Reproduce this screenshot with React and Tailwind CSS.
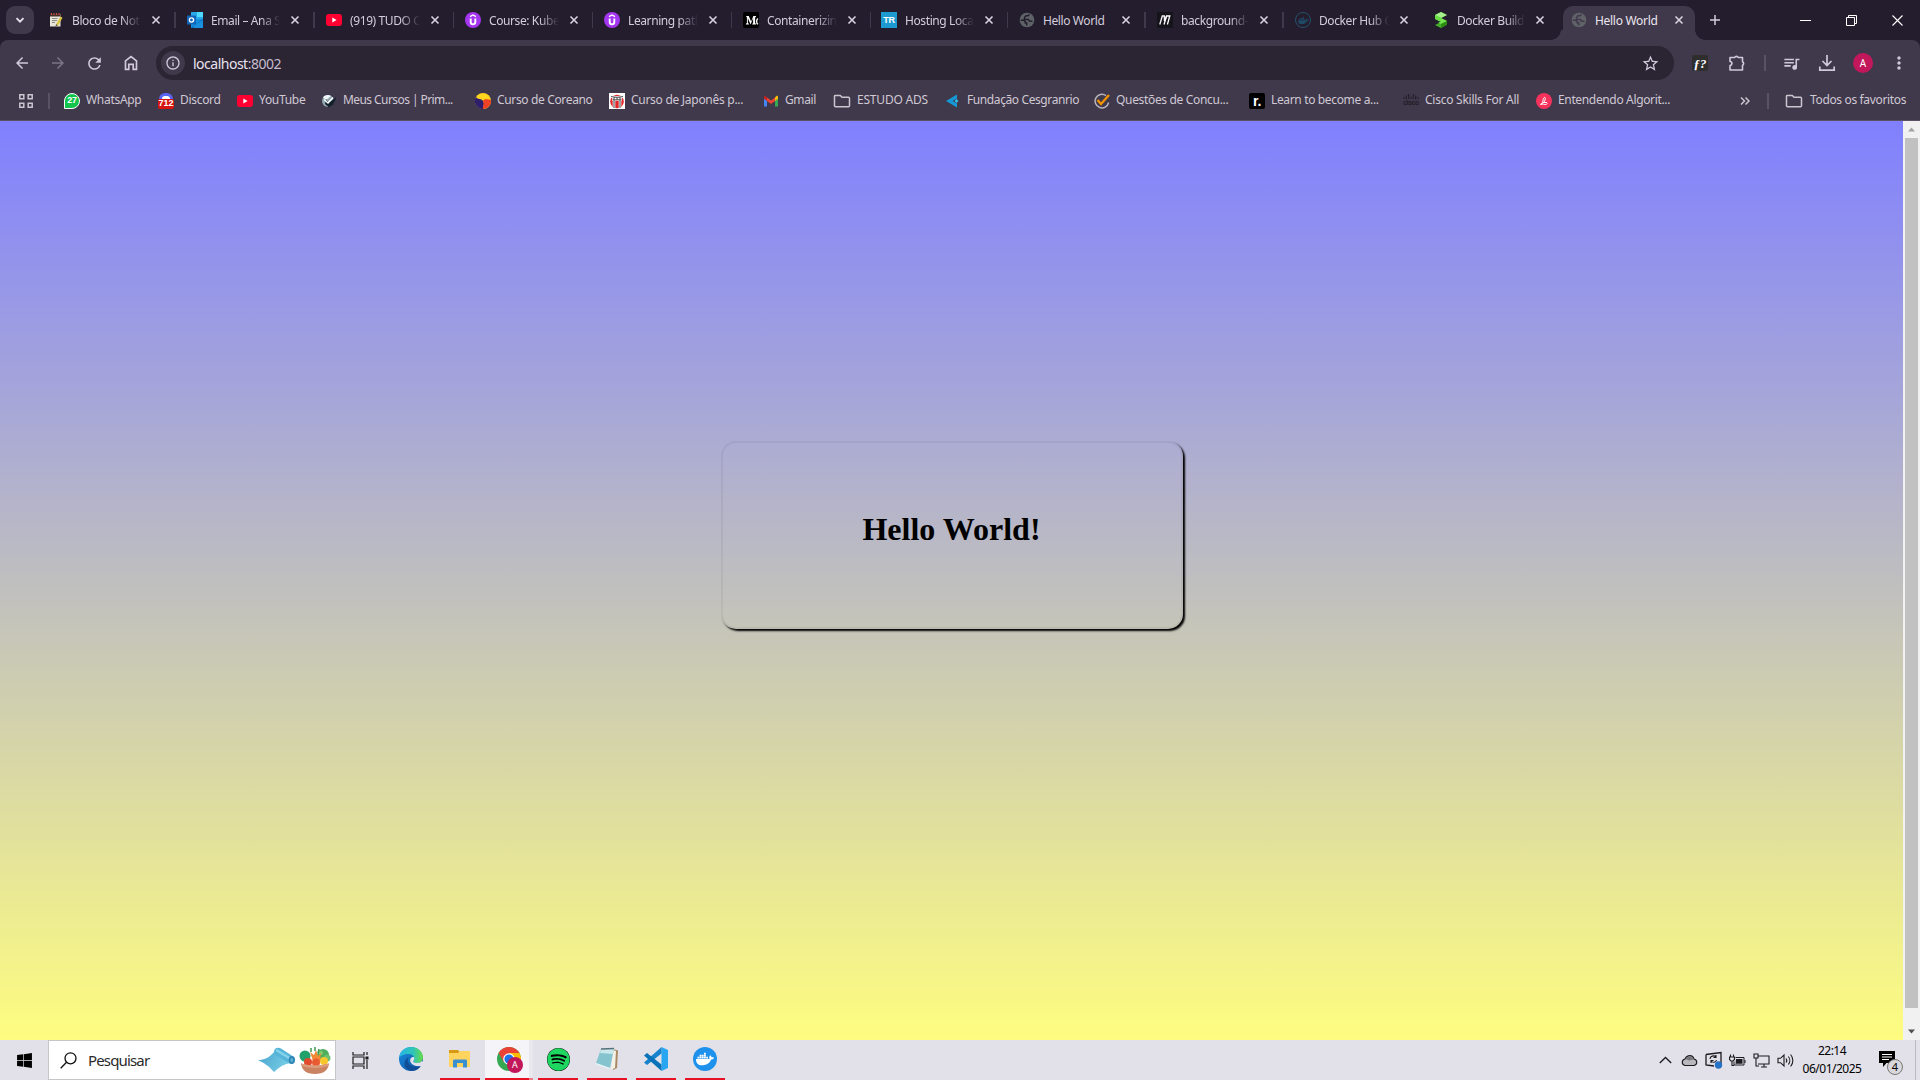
import React from 'react';
import { MdArrowBack, MdArrowForward, MdRefresh, MdOutlineInfo, MdStarOutline, MdOutlineQueueMusic, MdMoreVert } from 'react-icons/md';
import { FaDocker, FaSpotify, FaWindows } from 'react-icons/fa';

const Svg = ({ s = 16, vb = '0 0 16 16', children, className = '' }) => (
  <svg width={s} height={s} viewBox={vb} className={'shrink-0 ' + className}>{children}</svg>
);

const YouTube = () => (
  <Svg><rect y="2" width="16" height="12" rx="3" fill="#ff0033" /><path d="M6.3 5.500v5L10.600 8z" fill="#fff" /></Svg>
);
const Udemy = () => (
  <Svg><circle cx="8" cy="8" r="8" fill="#a435f0" /><path d="M5 4.600 8 3l3 1.600" stroke="#fff" strokeWidth="1.400" fill="none" /><path d="M5.700 6.500v3.600a2.300 2.300 0 0 0 4.600 0V6.500" stroke="#fff" strokeWidth="1.900" fill="none" /></Svg>
);
const Globe = ({ gap = '#241d2e' }) => (
  <Svg><circle cx="8" cy="8" r="7.300" fill="#5f6368" /><path d="M10.500 2.500 9 3.800H7L5.500 5.500v2h4l.8 1.500 3.200.3" fill="none" stroke={gap} strokeWidth="1.500" /><path d="M1.800 8.200h3.200l1.300 1.500v1.300h1.400v2.500" fill="none" stroke={gap} strokeWidth="1.500" /></Svg>
);
const Notes = () => (
  <Svg><path d="M2 2h10.500v12.500H2z" fill="#e8e5da" /><path d="M2 1.500h10.500v3H2z" fill="#47302a" /><path d="M3 1h1v2H3zM5.500 1h1v2h-1zM8 1h1v2H8zM10.500 1h1v2h-1z" fill="#d04b3c" /><path d="M4 6.500h5.500M4 8.500h5M4 10.500h3" stroke="#8b8b84" /><path d="m8 12.500 4.500-8 2 1.200-4.500 8z" fill="#d9c33b" /><path d="m7.600 14.300.4-2 1.700 1z" fill="#333" /></Svg>
);
const Outlook = () => (
  <Svg><path d="M4 0h12v8H4z" fill="#28a8ea" /><path d="M10 0h6v5h-6z" fill="#50d9ff" /><path d="M4 7h12v9H4z" fill="#1490df" /><path d="m4 16 12-9v9z" fill="#0a63b0" /><path d="M16 8 8 13l-2 3h10z" fill="#1a91e0" /><rect y="3.500" width="9" height="9" rx=".6" fill="#0f64b8" /><circle cx="4.500" cy="8" r="2.100" fill="none" stroke="#fff" strokeWidth="1.400" /></Svg>
);
const Medium = () => (
  <span className="flex h-4 w-4 shrink-0 items-center overflow-hidden rounded-[2px] bg-black pl-[2px]">
    <Svg s={14} vb="0 0 14 16"><path d="M0 3.500h3.300L6 9.800l2.600-6.300h3v.7l-1 .6v7l1 .6v.6H7.300v-.6l1-.6V6L5.400 13 2.300 6v5l1.200 1.500v.5H0v-.5L1.200 11V5z" fill="#fff" /><path d="M14 6.500c-2 .5-2.500 5.500 0 6.300" stroke="#fff" strokeWidth="1.600" fill="none" /></Svg>
  </span>
);
const TR = () => (
  <span className="flex h-4 w-4 shrink-0 items-center justify-center bg-[#1d9bd1] font-['Liberation_Sans',sans-serif] text-[9px] font-bold leading-none tracking-[-0.300px] text-white">TR</span>
);
const Mdn = () => (
  <Svg><path d="M0 0h16v16H0z" fill="#15141a" /><path d="M2.800 12.500 5.300 4l2 0 .2 5L9.500 4" stroke="#eee" strokeWidth="1.400" fill="none" /><path d="M7 12.500 9.600 4h3.200l-2.400 8.500" stroke="#fff" strokeWidth="1.300" fill="none" /></Svg>
);
const DockerRing = () => (
  <span className="flex h-4 w-4 shrink-0 items-center justify-center rounded-full border border-[#24506a] text-[#1f4a66]"><FaDocker size={11} /></span>
);
const GreenS = () => (
  <Svg><path d="m8 0 6 3-6 3 6 3v3.500L8 16l-6-3 6-3-6-3V3z" fill="#43b02a" /><path d="m8 0 6 3-6 3-6-3z" fill="#a8f08c" /><path d="m2 3 6 3v4L2 7z" fill="#6ade45" /><path d="m8 6 6 3-6 3-3-1.500L8 10z" fill="#78e352" /><path d="M14 9v3.500L8 16v-4z" fill="#2d8c12" /></Svg>
);

const tabs = [
  ['Bloco de Not', Notes, true], ['Email – Ana S', Outlook, true], ['(919) TUDO C', YouTube, true], ['Course: Kube', Udemy, true],
  ['Learning path', Udemy, true], ['Containerizin', Medium, true], ['Hosting Loca', TR, true], ['Hello World', Globe, false],
  ['background-', Mdn, true], ['Docker Hub C', DockerRing, true], ['Docker Build', GreenS, true],
];

const Close = () => <Svg s={10} vb="0 0 10 10"><path d="m1.500 1.500 7 7m0-7-7 7" stroke="#d9d2e0" strokeWidth="1.600" /></Svg>;

const Folder = () => (
  <Svg s={18} vb="0 0 18 16"><path d="M1.500 3.200v9.600c0 .6.400 1 1 1h13c.6 0 1-.4 1-1V5.200c0-.6-.4-1-1-1H9L7.300 2.500H2.300c-.5 0-.8.300-.8.700z" fill="none" stroke="#cbc5d0" strokeWidth="1.500" /></Svg>
);
const WhatsApp = () => (
  <span className="flex h-4 w-4 shrink-0 items-center justify-center rounded-full rounded-bl-none border border-white bg-[#12c34c] font-['Liberation_Sans',sans-serif] text-[9px] font-bold leading-none text-white">27</span>
);
const Discord = () => (
  <span className="flex h-4 w-4 shrink-0 flex-col items-center">
    <span className="h-[6px] w-[14px] rounded-t-full bg-[#5865f2]"><span className="mx-auto mt-[3px] block h-[3px] w-2 rounded-t bg-white" /></span>
    <span className="flex h-[10px] w-4 items-center justify-center rounded-[2px] bg-[#d8130f] font-['Liberation_Sans',sans-serif] text-[9px] font-bold leading-none tracking-normal text-white">712</span>
  </span>
);
const Prime = () => (
  <Svg><circle cx="7" cy="8" r="6" fill="#8fa5b0" /><path d="M2 4.500C4 1.500 8 1.500 10 3L6.500 6 4 6z" fill="#eef5f6" /><path d="M5 7l3 2.500L15.500 4l-3.500 8-4 2.500L4 11z" fill="#12202c" /><path d="M3 6.500 7 10l5-5.500" stroke="#fff" strokeWidth="1.300" fill="none" /></Svg>
);
const Korean = () => (
  <Svg><circle cx="8" cy="8" r="8" fill="#ffd51e" /><path d="M1 4a8 8 0 0 0 8 12c-1-4 1-5-1-8S3 7 1 4z" fill="#2e1e6b" /><path d="M8 8c2-3 6-1 8-1a8 8 0 0 1-8 9c-1-3 2-5 0-8z" fill="#ef4123" /></Svg>
);
const Torii = () => (
  <Svg><path d="M0 0h16v16H0z" fill="#fff" /><circle cx="8" cy="8.500" r="6.800" fill="#e0252b" /><path d="M2 3.500c4 1 8 1 12 0M3 6.500h10M5 4v11M11 4v11M8 4v3" stroke="#fff" strokeWidth="2.600" fill="none" /><path d="M2 3.500c4 1 8 1 12 0M3.500 6.800h9M5 4v11M11 4v11M8 4v3" stroke="#555" strokeWidth="1.100" fill="none" /></Svg>
);
const Gmail = () => (
  <Svg><path d="M1 4v9.500h3V6.500z" fill="#4285f4" /><path d="M12 6.500v7h3V4z" fill="#34a853" /><path d="M12 4.500V8l3-2.300V4c0-1.500-1.500-1.800-3 .5z" fill="#fbbc04" /><path d="M1 5.700 4 8V4.500C2.500 2.500 1 2.500 1 4z" fill="#c5221f" /><path d="M4 4.500 8 7.500l4-3V8l-4 3-4-3z" fill="#ea4335" /></Svg>
);
const Cesgranrio = () => (
  <Svg><path d="M1 8 12 1.500v4L7.500 8l4.500 2.500v4z" fill="#1599d6" /><path d="m9.500 8 2-2 2 2-2 2z" fill="#35bce9" /></Svg>
);
const Questoes = () => (
  <Svg><path d="M12 2.700A6.800 6.800 0 1 0 14.600 9.500" stroke="#b7b4bb" strokeWidth="1.500" fill="none" /><path d="m3.500 7 3.500 4L15 2" stroke="#f39200" strokeWidth="2.400" fill="none" /></Svg>
);
const Roadmap = () => (
  <span className="flex h-4 w-4 shrink-0 items-center justify-center rounded-[2px] bg-black font-['Liberation_Sans',sans-serif] text-[14px] font-bold leading-none text-white">r.</span>
);
const Cisco = () => (
  <Svg><path d="M1 4v2M3.300 2.500v4M5.700 1v5M8 3.500v2.500M10.300 1v5M12.700 2.500v4M15 4v2" stroke="#211b27" strokeWidth="1" /><text x="0" y="12" fontSize="7" fontWeight="700" fontFamily="Liberation Sans" fill="#211b27" textLength="16">cisco</text></Svg>
);
const Algo = () => (
  <Svg><circle cx="8" cy="8" r="8" fill="#f5325b" /><path d="M4.500 11.500c3-1 5-4 4.800-6.300-.1-1.500-2-.8-2.200 1.500C6.900 9 6.500 10 5 11s2-.3 3 .3 2.500.2 3.500-.8M8 9.500h3" stroke="#fff" strokeWidth="1" fill="none" /></Svg>
);

const bookmarks = [
  ['WhatsApp', WhatsApp, 'w-[94px] tracking-[-0.300px]'], ['Discord', Discord, 'w-[79px] tracking-[-0.300px]'], ['YouTube', YouTube, 'w-[84px] tracking-[-0.300px]'],
  ['Meus Cursos | Prim...', Prime, 'w-[154px] tracking-[-0.570px]'], ['Curso de Coreano', Korean, 'w-[134px] tracking-[-0.350px]'], ['Curso de Japonês p...', Torii, 'w-[154px] tracking-[-0.280px]'],
  ['Gmail', Gmail, 'w-[70px] tracking-[-0.400px]'], ['ESTUDO ADS', Folder, 'w-[112px] tracking-[-0.200px]'], ['Fundação Cesgranrio', Cesgranrio, 'w-[149px] tracking-[-0.400px]'],
  ['Questões de Concu...', Questoes, 'w-[155px] tracking-[-0.330px]'], ['Learn to become a...', Roadmap, 'w-[154px] tracking-[-0.350px]'], ['Cisco Skills For All', Cisco, 'w-[133px] tracking-[-0.250px]'],
  ['Entendendo Algorit...', Algo, 'w-[160px] tracking-[-0.350px]'],
];

function TabStrip() {
  return (
    <div className="flex h-10 bg-[#241d2e]">
      <div className="w-[37px] shrink-0 pl-[6px] pt-[6px]">
        <div className="flex h-7 w-7 items-center justify-center rounded-[9px] bg-[#40384b]">
          <Svg s={10} vb="0 0 10 10"><path d="m1.500 3.200 3.500 3.500 3.500-3.500" stroke="#e6e0ec" strokeWidth="1.900" fill="none" /></Svg>
        </div>
      </div>
      {tabs.map(([t, Icon, fade], i) => (
        <div key={i} className={'flex shrink-0 items-center pl-[11px] ' + (i < 5 ? 'w-[139px]' : 'w-[138px]')}>
          <Icon />
          <span className={'ml-2 mt-px w-[70px] whitespace-nowrap text-[12px] tracking-[-0.400px] text-[#d3ccdb] ' + (fade ? '[mask-image:linear-gradient(to_right,black_72%,transparent)]' : '')}>{t}</span>
          <span className="ml-[10px]"><Close /></span>
          <span className={'ml-[13px] h-4 w-[2px] ' + (i < 10 ? 'bg-[#40384b]' : '')} />
        </div>
      ))}
      <div className="flex items-end">
        <div className="-ml-[9px] h-[10px] w-[12px] bg-[radial-gradient(circle_at_0_0,#241d2e_9.500px,#40384b_10px)]" />
        <div className="flex h-[34px] w-[132px] items-center rounded-t-[10px] bg-[#40384b] pb-[6px] pl-[8px]">
          <Globe gap="#40384b" />
          <span className="ml-2 mt-px w-[70px] whitespace-nowrap text-[12px] tracking-[-0.300px] text-[#ebe6f0]">Hello World</span>
          <span className="ml-[9px]"><Close /></span>
        </div>
        <div className="h-[10px] w-[10px] bg-[radial-gradient(circle_at_100%_0,#241d2e_9.500px,#40384b_10px)]" />
      </div>
      <div className="flex flex-1 items-center">
        <Svg s={12} vb="0 0 12 12" className="ml-[4px]"><path d="M6 1v10M1 6h10" stroke="#d3ccdb" strokeWidth="1.500" /></Svg>
        <div className="ml-auto flex items-center gap-[35px] pr-[17px]">
          <Svg s={11} vb="0 0 11 11"><path d="M0 5.500h11" stroke="#fff" /></Svg>
          <Svg s={11} vb="0 0 11 11"><path d="M.5 2.500h8v8h-8zM2.500 2.500v-2h8v8h-2" stroke="#fff" fill="none" /></Svg>
          <Svg s={11} vb="0 0 11 11"><path d="m.5.500 10 10m0-10-10 10" stroke="#fff" strokeWidth="1.100" /></Svg>
        </div>
      </div>
    </div>
  );
}

function Toolbar() {
  return (
    <div className="bg-[#241d2e]">
      <div className="flex h-[46px] items-center rounded-t-[8px] bg-[#40384b] pl-[13px] text-[#d1c8db]">
        <MdArrowBack size={18} />
        <MdArrowForward size={18} className="ml-[18px] text-[#7c7388]" />
        <MdRefresh size={19} className="ml-[18px]" />
        <Svg s={18} vb="0 0 18 18" className="ml-[18px]"><path d="M3.500 15.300V6.800L9 2.600l5.500 4.200v8.500h-3.300v-5H6.800v5z" fill="none" stroke="#d1c8db" strokeWidth="1.700" /></Svg>
        <div className="ml-[16px] flex h-[34px] w-[1518px] items-center rounded-full bg-[#2b2433] pl-[5px]">
          <span className="flex h-6 w-6 items-center justify-center rounded-full bg-[#40384b]"><MdOutlineInfo size={16} /></span>
          <span className="ml-2 text-[14px] tracking-[-0.500px] text-[#e8e2ee]">localhost<span className="text-[#c5bdcd]">:8002</span></span>
          <MdStarOutline size={19} className="ml-auto mr-[14px]" />
        </div>
        <span className="ml-[18px] flex h-4 w-4 items-center justify-center rounded-[2px] bg-[#2e2e2e] font-['Liberation_Serif',serif] text-[13px] font-bold italic leading-none text-white">ƒ?</span>
        <Svg s={18} vb="0 0 18 18" className="ml-[20px]"><path d="M2 3.500h4.700a2 2 0 0 1 3.600 0h4.200v4.200a2 2 0 0 1 0 3.600v4.700H2v-4.500c2.600-.3 2.600-3.700 0-4z" fill="none" stroke="#d1c8db" strokeWidth="1.600" strokeLinejoin="round" /></Svg>
        <span className="ml-[18px] h-4 w-[2px] bg-[#5a5166]" />
        <MdOutlineQueueMusic size={19} className="ml-[16px]" />
        <Svg s={18} vb="0 0 18 18" className="ml-[17px]"><path d="M9 1v10M4.500 7 9 11.500 13.500 7M1.800 12.500v3.700h14.400v-3.700" stroke="#d1c8db" strokeWidth="1.700" fill="none" /></Svg>
        <span className="ml-[17px] flex h-5 w-5 items-center justify-center rounded-full bg-[#c2185b] text-[10px] text-white">A</span>
        <MdMoreVert size={20} className="ml-[16px]" />
      </div>
    </div>
  );
}

function Bookmarks() {
  return (
    <div className="flex h-[35px] items-center border-b border-[#5a5263] bg-[#40384b] pb-[5px] text-[12px] tracking-[-0.350px] text-[#cfc9d4]">
      <Svg s={14} vb="0 0 14 14" className="ml-[19px]"><path d="M.8.800h4v4h-4zM9.200.800h4v4h-4zM.8 9.200h4v4h-4zM9.200 9.200h4v4h-4z" stroke="#cbc5d0" strokeWidth="1.500" fill="none" /></Svg>
      <span className="ml-[15px] mr-[14px] h-4 w-[2px] bg-[#5a5166]" />
      {bookmarks.map(([t, Icon, w]) => (
        <div key={t} className={'flex shrink-0 items-center gap-[6px] whitespace-nowrap ' + w}><Icon /><span className="pb-[2px]">{t}</span></div>
      ))}
      <Svg s={10} vb="0 0 10 10" className="ml-auto"><path d="m1 1.500 3.500 3.500L1 8.500m4.500-7L9 5 5.500 8.500" stroke="#cbc5d0" strokeWidth="1.500" fill="none" /></Svg>
      <span className="ml-[17px] h-4 w-[2px] bg-[#5a5166]" />
      <div className="ml-[16px] mr-[14px] flex w-[121px] items-center gap-[7px] whitespace-nowrap"><Folder /><span className="pb-[2px]">Todos os favoritos</span></div>
    </div>
  );
}

function Edge() {
  return (
    <Svg s={24} vb="0 0 24 24">
      <defs>
        <linearGradient id="edgeTop"><stop stopColor="#28b7e8" /><stop offset=".6" stopColor="#2fc5b6" /><stop offset="1" stopColor="#68dc45" /></linearGradient>
        <linearGradient id="edgeLow" x2="1" y2="1"><stop stopColor="#1b8ee0" /><stop offset="1" stopColor="#0c4f9c" /></linearGradient>
      </defs>
      <circle cx="12" cy="12" r="12" fill="url(#edgeLow)" />
      <path d="M0 11C1 4 6 0 12 0c7 0 12 5 12 10.500 0 3.500-3 5.500-6 5.500-3.500 0-4.500-1-3.500-2.300 2-3-.5-6.700-5-6.700C5 7 1 9 0 11z" fill="url(#edgeTop)" />
      <path d="M14.500 13.700c-1 1.300 0 2.300 3.500 2.300 2 0 4-1 5-2.300l1.500 2-2 3.300c-4 1-9 0-11-4-1-2.500.5-5 2.500-5 1.300 0 1.800 1.500.5 3.700z" fill="#e3e2ec" />
      <path d="M9.500 10c-3 5 2 12.500 12 9.300C18 25 10 25 7 21c-3-4-1-9 2.500-11z" fill="#104f97" />
    </Svg>
  );
}
const Explorer = () => (
  <Svg s={22} vb="0 0 22 20"><path d="M0 1h9l1.500 2H20v4H0z" fill="#d99a12" /><path d="M0 4h9l2-2h10v16H0z" fill="#ffd45e" /><path d="M4 18.500V12c0-1 .5-1.500 1.500-1.500h11c1 0 1.500.5 1.500 1.500v6.500h-4V14H8v4.500z" fill="#3a8fd0" /></Svg>
);
const Chrome = () => (
  <span className="relative block h-6 w-6">
    <Svg s={24} vb="0 0 24 24"><circle cx="12" cy="12" r="12" fill="#34a853" /><path d="M1.600 6A12 12 0 0 1 22.400 6H12l-5.200 9z" fill="#ea4335" /><path d="M22.400 6A12 12 0 0 1 12 24l5.200-9L12 6z" fill="#fbbc04" /><circle cx="12" cy="12" r="5.800" fill="#fff" /><circle cx="12" cy="12" r="4.600" fill="#1a73e8" /></Svg>
    <span className="absolute left-[10px] top-[10px] flex h-4 w-4 items-center justify-center rounded-full bg-[#c2185b] text-[9px] text-white">A</span>
  </span>
);
const Notepad = () => (
  <Svg s={24} vb="0 0 24 24"><path d="m18 2 5 1.500-1 17.500-4 2z" fill="#a98962" /><path d="m18 3 3 1-1 17-4 1.500z" fill="#f4f1e6" /><path d="M6 2h13l-4 19L1 16z" fill="#85c3cf" /><path d="M6 2h13l-1 5L5 6z" fill="#c9e8ec" /><path d="m6 2 13-.5" stroke="#55707a" strokeWidth="1.400" /><path d="m1 16 14 5v1.500L1 17.500z" fill="#e3f3f5" /></Svg>
);
const Code = () => (
  <Svg s={24} vb="0 0 24 24"><path d="m17.500 0 6.500 3v18l-6.500 3z" fill="#29a6f1" /><path d="M17.500 0v6.500L3 18l-3-2.500z" fill="#1883cc" /><path d="M17.500 24v-6.500L3 6 0 8.500z" fill="#0a72b8" /></Svg>
);

function TaskApp({ children, wrap, bar }) {
  return (
    <div className={'flex h-full flex-col ' + wrap}>
      <div className="flex flex-1 items-center justify-center">{children}</div>
      <div className={'h-[2px] ' + bar} />
    </div>
  );
}

function SearchArt() {
  return (
    <>
      <svg width="38" height="26" viewBox="0 0 38 26" className="ml-auto shrink-0">
        <defs><linearGradient id="mat" x2="1" y2="0.300"><stop stopColor="#4aa5cc" /><stop offset="1" stopColor="#74cbe6" /></linearGradient></defs>
        <path d="M0 13c6 0 11-2 16-8l16 11c-6 1-11 4-16 9C11 19 6 16 0 13z" fill="url(#mat)" />
        <path d="M16 5c0-4 4-5 7-3.500L36 10c3 3 0 8-4.500 6.500L17 7.500C16 7 16 6 16 5z" fill="#56b4d8" />
        <path d="M19 3.500 33 12" stroke="#86d4ec" strokeWidth="2.500" strokeLinecap="round" />
        <ellipse cx="33.800" cy="13" rx="3" ry="4" fill="#2f86b5" />
        <ellipse cx="33.800" cy="13" rx="1.300" ry="2" fill="#5db4d6" />
      </svg>
      <svg width="32" height="27" viewBox="0 0 32 27" className="ml-[3px] mr-[4px] shrink-0">
        <circle cx="6" cy="9" r="5.500" fill="#22a06b" /><circle cx="24" cy="8" r="6" fill="#4dae5c" /><circle cx="28" cy="11" r="3.500" fill="#6cc070" /><circle cx="22" cy="6" r="2" fill="#8acb6c" />
        <path d="m11 5 3 9h7l1-8-3 3-2-6-2 5z" fill="#f08a33" /><path d="M12 1v4m4-5v4m4-2-1 4" stroke="#3c9a50" strokeWidth="1.500" />
        <circle cx="25" cy="14" r="4" fill="#f8c62d" /><circle cx="9" cy="15" r="4" fill="#e14a2d" /><circle cx="17" cy="15.500" r="4" fill="#ea5a31" />
        <path d="M2 16.500c9 2.500 19 2.500 28 0-1 6.500-5 10.500-14 10.500S3 23 2 16.500z" fill="#c98363" /><path d="M2 16.500c9 2.500 19 2.500 28 0l-.5 2.500c-9 2.500-18 2.500-27 0z" fill="#dd9d7b" />
      </svg>
    </>
  );
}

function Taskbar() {
  const k = '#1b1b1f';
  return (
    <div className="flex h-10 items-center bg-[#e2e1e9] text-black">
      <div className="flex w-12 shrink-0 justify-center"><FaWindows size={17} /></div>
      <div className="flex h-10 w-[288px] shrink-0 items-center border border-[#c6c6ca] bg-white pl-[11px]">
        <Svg s={17} vb="0 0 17 17"><circle cx="10.500" cy="6.300" r="5.500" fill="none" stroke="#111" strokeWidth="1.300" /><path d="M6.500 10.300.700 16.200" stroke="#111" strokeWidth="1.300" /></Svg>
        <span className="ml-[11px] text-[15px] tracking-[-0.850px] text-[#2b2b2b]">Pesquisar</span>
        <SearchArt />
      </div>
      <Svg s={17} vb="0 0 17 17" className="ml-[16px]"><path d="M1 0v3h11V0M1 17v-3h11v3M1 5h11v7H1zM15 0v3m0 5v9" stroke={k} strokeWidth="1.200" fill="none" /><path d="M13.500 4.500h3v3h-3z" fill={k} /></Svg>
      <TaskApp wrap="ml-[18px] w-[48px]" bar="bg-transparent"><Edge /></TaskApp>
      <TaskApp wrap="ml-[5px] w-10" bar="bg-[#e81123]"><Explorer /></TaskApp>
      <TaskApp wrap="ml-[5px] w-[48px] bg-gradient-to-r from-[#f5f4f9] from-[92%] to-[#e9e8ee] to-[92%]" bar="bg-linear-to-r from-[#e81123] from-[92%] to-[#ee7a85] to-[92%]"><Chrome /></TaskApp>
      <TaskApp wrap="ml-[5px] w-10" bar="bg-[#e81123]"><span className="rounded-full bg-black text-[#1ed760]"><FaSpotify size={23} /></span></TaskApp>
      <TaskApp wrap="ml-[9px] w-10" bar="bg-[#e81123]"><Notepad /></TaskApp>
      <TaskApp wrap="ml-[9px] w-10" bar="bg-[#e81123]"><Code /></TaskApp>
      <TaskApp wrap="ml-[9px] w-10" bar="bg-[#e81123]"><span className="flex h-6 w-6 items-center justify-center rounded-full bg-[#1d91ec] text-white"><FaDocker size={18} /></span></TaskApp>
      <div className="ml-auto flex h-full items-center">
        <Svg s={13} vb="0 0 13 13"><path d="m.8 9 5.700-5.500L12.200 9" stroke={k} strokeWidth="1.300" fill="none" /></Svg>
        <Svg s={17} vb="0 0 17 16" className="ml-[9px]"><path d="M4 13a3.300 3.300 0 0 1 0-6.500C6 2 12 2 13 6.500a3.300 3.300 0 0 1 0 6.500z" fill="#b9b9bd" stroke={k} strokeWidth="1.100" /><path d="M4.500 6.500C7 3 11 3.500 12.500 7L8 8z" fill="#77777c" /></Svg>
        <Svg s={18} vb="0 0 18 18" className="ml-[7px]"><path d="M1 3.500 16 1.500v12M1 3.500v10.500l8 1" stroke={k} strokeWidth="1.300" fill="none" /><path d="M5 8c0-3 4-4 6-2M11 4v2.500H8.500M11.500 9c-.5 2.500-4 3-5.500 1M6 12V9.500h2.500" stroke={k} strokeWidth="1.100" fill="none" /><circle cx="13.500" cy="14" r="3.700" fill="#2672c4" /></Svg>
        <Svg s={17} vb="0 0 17 16" className="ml-[6px]"><path d="M1.500 2v2.500M4.500 2v2.500M.5 4.500h5V7L4 8.500H2L.5 7zM3 8.500V13h2" stroke={k} strokeWidth="1.100" fill="none" /><path d="M6.500 5h8.500v7.500H5V9" stroke={k} fill="none" /><path d="M7 6.500h6.500v4.700H6.500zM15.500 7.500h1v3h-1z" fill={k} /></Svg>
        <Svg s={17} vb="0 0 17 16" className="ml-[7px]"><path d="M5 3.500h11v8H5M8 14.500h6M11 11.500v3M1 1.500h4v4H1zM3 5.500v8h3" stroke={k} strokeWidth="1.100" fill="none" /></Svg>
        <Svg s={17} vb="0 0 17 16" className="ml-[7px]"><path d="M1 5.800h2.500L7 2.500v11l-3.500-3.300H1z" stroke={k} strokeWidth="1.100" fill="none" /><path d="M9 6c1 1.200 1 2.800 0 4M11.300 4c2 2.300 2 5.700 0 8M13.600 2c3 3.500 3 8.500 0 12" stroke={k} strokeWidth="1.100" fill="none" /></Svg>
        <div className="ml-[7px] flex w-[62px] flex-col items-center whitespace-nowrap text-[12px] leading-[18px] tracking-[-0.500px]"><span>22:14</span><span>06/01/2025</span></div>
        <span className="relative ml-[16px] block h-7 w-6">
          <Svg s={17} vb="0 0 17 17" className="mt-[5px]"><path d="M0 0h16v12H7.500L4 16v-4H0z" fill="#000" /><path d="M3 3.500h10M3 6h10M3 8.500h7" stroke="#fff" strokeWidth="1.100" /></Svg>
          <span className="absolute left-[8px] top-[13px] flex h-4 w-4 items-center justify-center rounded-full border border-[#777] bg-[#d8d8dc] text-[11px]">4</span>
        </span>
        <span className="ml-[12px] mr-[4px] h-full w-px bg-[#b9b8c0]" />
      </div>
    </div>
  );
}

export default function App() {
  return (
    <div className="flex h-[1080px] w-[1920px] flex-col overflow-hidden font-['Noto_Sans',sans-serif]">
      <TabStrip />
      <Toolbar />
      <Bookmarks />
      <div className="flex min-h-0 flex-1">
        <main className="flex flex-1 flex-col items-center bg-[linear-gradient(#8080ff,#fefd80)] pt-[320px]">
          <div className="flex h-[188px] w-[462px] items-start justify-center rounded-[15px] border-2 border-black/5 pt-[68px] shadow-[2px_2px_2px_black]">
            <h1 className="font-['Liberation_Serif',serif] text-[32px] font-bold leading-[37px] text-black">Hello World!</h1>
          </div>
        </main>
        <div className="flex w-[17px] flex-col items-center bg-[#f1f1f1]">
          <span className="flex h-[17px] items-center"><Svg s={7} vb="0 0 7 4"><path d="M0 4h7L3.500 0z" fill="#a3a3a3" /></Svg></span>
          <span className="w-[13px] flex-1 bg-[#c1c1c1]" />
          <span className="flex h-[32px] items-end pb-[5px]"><Svg s={7} vb="0 0 7 4"><path d="M0 0h7L3.500 4z" fill="#505050" /></Svg></span>
        </div>
      </div>
      <Taskbar />
    </div>
  );
}
